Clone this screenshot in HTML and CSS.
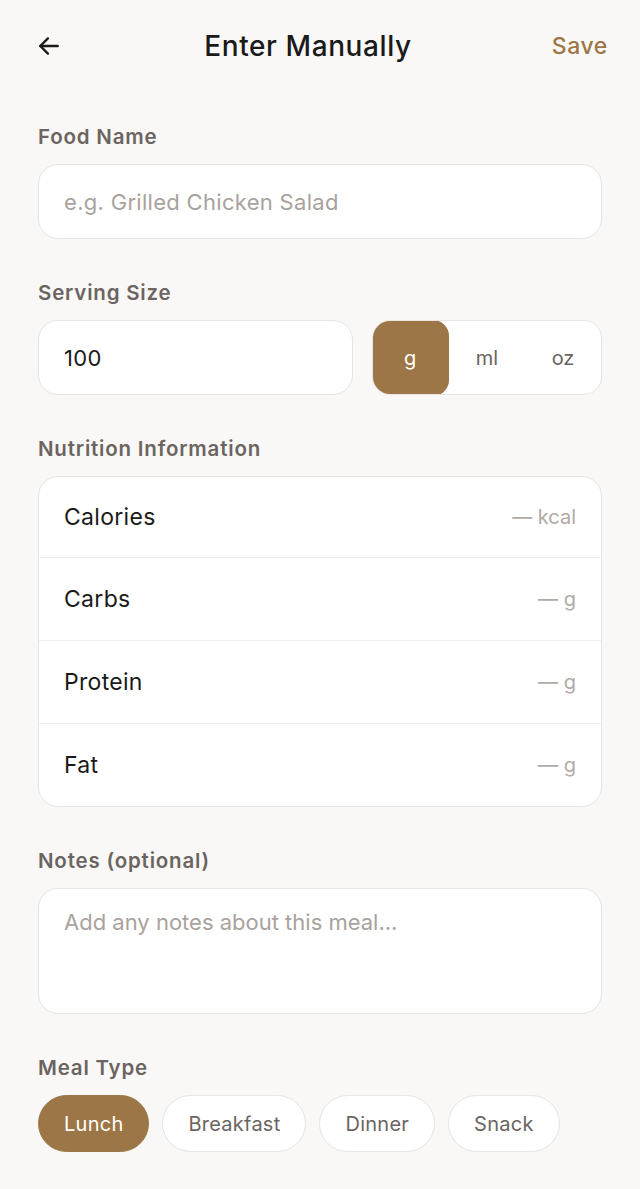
FILE: index.html
```html
<!DOCTYPE html>
<html lang="en">
<head>
    <meta charset="UTF-8">
    <meta name="viewport" content="width=device-width, initial-scale=1.0">
    <title>Enter Manually</title>
    <link rel="stylesheet" href="styles.css">
</head>
<body>
    <header class="top-bar">
        <button class="back-btn" aria-label="Back">
            <svg width="26" height="26" viewBox="0 0 24 24" fill="none" stroke="#1a1a1a" stroke-width="2.2" stroke-linecap="round" stroke-linejoin="round">
                <path d="M20 12H4"/>
                <path d="M11 5l-7 7 7 7"/>
            </svg>
        </button>
        <h1>Enter Manually</h1>
        <button class="save-btn">Save</button>
    </header>

    <main class="form">
        <section class="field">
            <label class="field-label">Food Name</label>
            <div class="input-box">
                <span class="placeholder">e.g. Grilled Chicken Salad</span>
            </div>
        </section>

        <section class="field">
            <label class="field-label">Serving Size</label>
            <div class="serving-row">
                <div class="input-box serving-input">
                    <span class="value">100</span>
                </div>
                <div class="units">
                    <span class="unit active">g</span>
                    <span class="unit">ml</span>
                    <span class="unit">oz</span>
                </div>
            </div>
        </section>

        <section class="field">
            <label class="field-label">Nutrition Information</label>
            <div class="nutrition-card">
                <div class="nutrition-row">
                    <span class="nutrient">Calories</span>
                    <span class="amount">— kcal</span>
                </div>
                <div class="nutrition-row">
                    <span class="nutrient">Carbs</span>
                    <span class="amount">— g</span>
                </div>
                <div class="nutrition-row">
                    <span class="nutrient">Protein</span>
                    <span class="amount">— g</span>
                </div>
                <div class="nutrition-row">
                    <span class="nutrient">Fat</span>
                    <span class="amount">— g</span>
                </div>
            </div>
        </section>

        <section class="field">
            <label class="field-label">Notes (optional)</label>
            <div class="input-box notes-box">
                <span class="placeholder">Add any notes about this meal...</span>
            </div>
        </section>

        <section class="field">
            <label class="field-label">Meal Type</label>
            <div class="chips">
                <span class="chip active">Lunch</span>
                <span class="chip">Breakfast</span>
                <span class="chip">Dinner</span>
                <span class="chip">Snack</span>
            </div>
        </section>
    </main>
</body>
</html>
```

FILE: styles.css
```css
body {
    font-family: 'Inter', 'Noto Sans', sans-serif;
    margin: 0;
    padding: 0;
    background: #f9f8f6;
    color: #1a1a1a;
    min-height: 100vh;
}

.top-bar {
    height: 92px;
    padding: 0 32px 0 36px;
    display: flex;
    align-items: center;
    justify-content: space-between;
}

.back-btn, .save-btn {
    background: none;
    border: none;
    padding: 0;
    cursor: pointer;
    font-family: inherit;
}

.back-btn {
    width: 80px;
    display: flex;
    align-items: center;
}

.top-bar h1 {
    margin: 0 0 0 -28px;
    font-size: 28px;
    font-weight: 500;
    letter-spacing: 0.6px;
}

.save-btn {
    width: 80px;
    text-align: right;
    font-size: 23px;
    font-weight: 500;
    letter-spacing: 0.6px;
    color: #9c7646;
}

.form {
    padding: 32px 38px 40px 38px;
    display: flex;
    flex-direction: column;
    gap: 41px;
}

.field {
    display: flex;
    flex-direction: column;
}

.field-label {
    font-size: 20.5px;
    line-height: 26px;
    font-weight: 600;
    letter-spacing: 0.8px;
    color: #6b6461;
    margin-bottom: 14px;
}

.input-box {
    background: #fff;
    border: 1.5px solid #e7e4e1;
    border-radius: 20px;
    height: 75px;
    box-sizing: border-box;
    padding: 0 25px;
    display: flex;
    align-items: center;
    font-size: 22px;
    letter-spacing: 0.3px;
}

.placeholder {
    color: #a9a29d;
}

.value {
    color: #1a1a1a;
}

.serving-row {
    display: flex;
    gap: 19px;
}

.serving-input {
    flex: 0 0 315px;
}

.units {
    flex: 1;
    height: 75px;
    box-sizing: border-box;
    background: #fff;
    border: 1.5px solid #e7e4e1;
    border-radius: 18px;
    display: grid;
    grid-template-columns: repeat(3, 1fr);
    overflow: hidden;
}

.unit {
    display: flex;
    align-items: center;
    justify-content: center;
    font-size: 20px;
    color: #6b6461;
}

.unit.active {
    background: #9c7646;
    color: #fff;
    border-radius: 16px;
    margin: -1.5px 0 -1.5px -1.5px;
}

.nutrition-card {
    background: #fff;
    border: 1.5px solid #e7e4e1;
    border-radius: 20px;
    overflow: hidden;
}

.nutrition-row {
    height: 82px;
    padding: 0 25px;
    display: flex;
    align-items: center;
    justify-content: space-between;
    border-bottom: 1.5px solid #f1efed;
}

.nutrition-row:first-child {
    height: 80px;
}

.nutrition-row:last-child {
    border-bottom: none;
}

.nutrient {
    font-size: 23px;
    letter-spacing: 0.3px;
    color: #1a1a1a;
}

.amount {
    font-size: 20px;
    color: #b1aaa5;
}

.notes-box {
    height: 126px;
    align-items: flex-start;
    padding-top: 20px;
    letter-spacing: 0;
}

.chips {
    display: flex;
    gap: 13px;
}

.chip {
    height: 57px;
    box-sizing: border-box;
    padding: 0 25px;
    display: flex;
    align-items: center;
    border-radius: 999px;
    border: 1.5px solid #e7e4e1;
    background: #fff;
    font-size: 20px;
    letter-spacing: 0.25px;
    color: #6b6461;
}

.chip.active {
    background: #9c7646;
    border-color: #9c7646;
    color: #fff;
}
```
